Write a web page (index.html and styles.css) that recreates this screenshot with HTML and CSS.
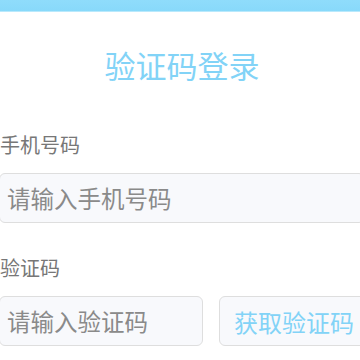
FILE: index.html
```html
<!DOCTYPE html>
<html lang="zh-CN">
<head>
<meta charset="utf-8">
<link rel="stylesheet" href="styles.css">
</head>
<body>
<div class="topbar"></div>
<main class="page">
  <h1 class="title">验证码登录</h1>
  <div class="field">
    <label class="label">手机号码</label>
    <div class="input"><span class="placeholder">请输入手机号码</span></div>
  </div>
  <div class="field">
    <label class="label">验证码</label>
    <div class="row">
      <div class="input code"><span class="placeholder">请输入验证码</span></div>
      <div class="btn">获取验证码</div>
    </div>
  </div>
</main>
</body>
</html>
```
FILE: styles.css
```css
html, body {
  margin: 0;
  padding: 0;
  background: #ffffff;
  overflow: hidden;
  width: 360px;
  height: 360px;
}
body {
  font-family: "Noto Sans CJK SC", "Noto Sans", sans-serif;
}
.topbar {
  height: 11px;
  background: linear-gradient(#8fdcfb, #88d9fa);
  border-bottom: 1px solid #b9e9fc;
}
.page {
  width: 366px;
  margin-left: -1px;
}
.title {
  margin: 37px 0 0;
  font-size: 31px;
  line-height: 32px;
  font-weight: 400;
  color: #82d3f7;
  text-align: center;
}
.field {
  display: flex;
  flex-direction: column;
}
.label {
  margin-top: 54px;
  font-size: 20px;
  line-height: 20px;
  color: #777777;
  padding-left: 1px;
}
.field + .field .label {
  margin-top: 35px;
}
.input {
  margin-top: 18px;
  height: 48px;
  box-sizing: content-box;
  border: 1px solid #dedede;
  border-radius: 6px;
  background: #f8f9fc;
  display: flex;
  align-items: center;
  padding: 0 7px;
}
.placeholder {
  font-size: 23.5px;
  color: #8a8a8a;
  white-space: nowrap;
}
.row {
  display: flex;
  gap: 16px;
  margin-top: 18px;
  width: 390px;
}
.row .input {
  margin-top: 0;
}
.code {
  width: 188px;
  flex: none;
}
.btn {
  flex: 1;
  height: 48px;
  border: 1px solid #dedede;
  border-radius: 6px;
  background: #f8f9fc;
  display: flex;
  align-items: center;
  padding: 0 14px;
  font-size: 24px;
  color: #82d3f7;
  white-space: nowrap;
}
```
